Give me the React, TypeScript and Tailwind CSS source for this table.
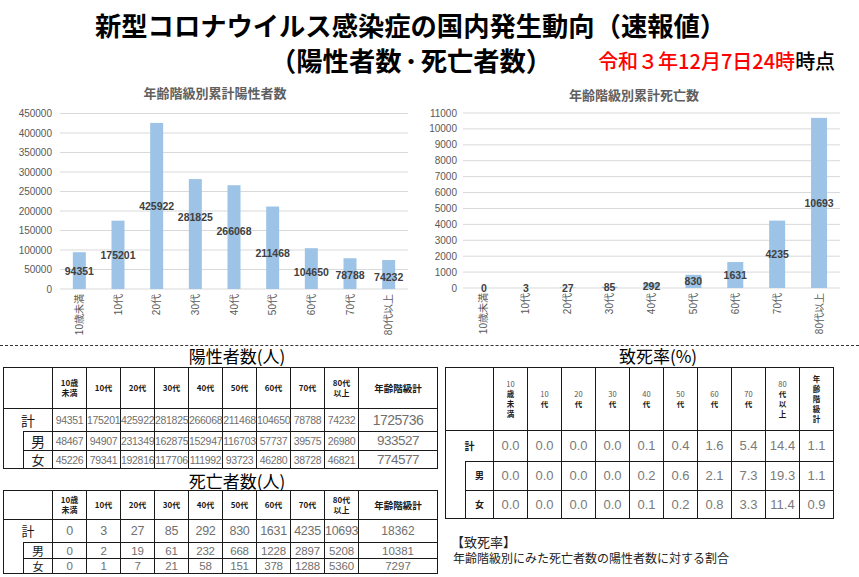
import React from "react";

const AGES = ["10歳未満", "10代", "20代", "30代", "40代", "50代", "60代", "70代", "80代以上"];

type ChartProps = {
  width: number;
  title: string;
  titleX: number;
  titleY: number;
  plotL: number;
  plotR: number;
  base: number;
  top: number;
  max: number;
  step: number;
  axisX: number;
  barW: number;
  values: number[];
  labelY: number[];
};

function BarChart(p: ChartProps) {
  const cw = (p.plotR - p.plotL) / p.values.length;
  const scale = (p.base - p.top) / p.max;
  const ticks: number[] = [];
  for (let v = 0; v <= p.max; v += p.step) ticks.push(v);

  return (
    <svg
      width={p.width}
      height={265}
      className="block shrink-0 overflow-visible"
      fontFamily="'Liberation Sans','Noto Sans CJK JP',sans-serif"
    >
      <text x={p.titleX} y={p.titleY} textAnchor="middle" dominantBaseline="central" fontSize={13} fontWeight={700} fill="#5f5f5f">
        {p.title}
      </text>
      {ticks.map((v) => {
        const y = p.base - v * scale;
        return (
          <g key={v}>
            <line x1={p.plotL} x2={p.plotR} y1={y} y2={y} stroke="#d9d9d9" strokeWidth={1} />
            <text x={p.axisX} y={y} textAnchor="end" dominantBaseline="central" fontSize={10} fill="#595959">
              {v}
            </text>
          </g>
        );
      })}
      {p.values.map((v, i) => {
        const cx = p.plotL + cw * (i + 0.5);
        const h = v * scale;
        return (
          <g key={i}>
            <rect x={cx - p.barW / 2} y={p.base - h} width={p.barW} height={h} fill="#9dc3e6" />
            <text x={cx} y={p.labelY[i]} textAnchor="middle" dominantBaseline="central" fontSize={10.5} fontWeight={700} fill="#404040">
              {v}
            </text>
            <text
              x={cx}
              y={p.base + 5}
              transform={`rotate(-90 ${cx} ${p.base + 5})`}
              textAnchor="end"
              dominantBaseline="central"
              fontSize={10}
              fill="#595959"
            >
              {AGES[i]}
            </text>
          </g>
        );
      })}
    </svg>
  );
}

const cell = "border border-[#1a1a1a] p-0 text-center align-middle";

const POS = {
  total: ["94351", "175201", "425922", "281825", "266068", "211468", "104650", "78788", "74232"],
  male: ["48467", "94907", "231349", "162875", "152947", "116703", "57737", "39575", "26980"],
  female: ["45226", "79341", "192816", "117706", "111992", "93723", "46280", "38728", "46821"],
};

const DEATH = {
  total: ["0", "3", "27", "85", "292", "830", "1631", "4235", "10693"],
  male: ["0", "2", "19", "61", "232", "668", "1228", "2897", "5208"],
  female: ["0", "1", "7", "21", "58", "151", "378", "1288", "5360"],
};

const RATE = {
  total: ["0.0", "0.0", "0.0", "0.0", "0.1", "0.4", "1.6", "5.4", "14.4", "1.1"],
  male: ["0.0", "0.0", "0.0", "0.0", "0.2", "0.6", "2.1", "7.3", "19.3", "1.1"],
  female: ["0.0", "0.0", "0.0", "0.0", "0.1", "0.2", "0.8", "3.3", "11.4", "0.9"],
};

function HeadRow({ h }: { h: string }) {
  return (
    <tr className={h}>
      <th colSpan={2} className={cell}></th>
      <th className={cell}>10歳<br />未満</th>
      <th className={cell}>10代</th>
      <th className={cell}>20代</th>
      <th className={cell}>30代</th>
      <th className={cell}>40代</th>
      <th className={cell}>50代</th>
      <th className={cell}>60代</th>
      <th className={cell}>70代</th>
      <th className={cell}>80代<br />以上</th>
      <th className={`${cell} text-[9.5px]`}>年齢階級計</th>
    </tr>
  );
}

function Cols() {
  return (
    <colgroup>
      <col className="w-[20px]" />
      <col className="w-[29px]" />
      {AGES.map((a) => (
        <col key={a} className="w-[34px]" />
      ))}
      <col className="w-[79px]" />
    </colgroup>
  );
}

function PositiveTable() {
  const num = "font-['Liberation_Sans',sans-serif] text-[#6f6f6f]";
  return (
    <table className="ml-[3px] w-[434px] table-fixed border-collapse text-[8px] font-normal leading-[10px] text-[#1a1a1a]">
      <Cols />
      <tbody>
        <HeadRow h="h-[41px]" />
        <tr className="h-[23px]">
          <td colSpan={2} className={`${cell} text-[14px]`}>計</td>
          {POS.total.map((v, i) => (
            <td key={i} className={`${cell} ${num} text-[10.5px] tracking-[-0.3px]`}>{v}</td>
          ))}
          <td className={`${cell} ${num} text-[14px] tracking-[-0.6px]`}>1725736</td>
        </tr>
        <tr className="h-[19px]">
          <td rowSpan={2} className={`${cell} [border-top-style:hidden]`}></td>
          <td className={`${cell} text-[14px]`}>男</td>
          {POS.male.map((v, i) => (
            <td key={i} className={`${cell} ${num} text-[10.5px] tracking-[-0.3px]`}>{v}</td>
          ))}
          <td className={`${cell} ${num} text-[13.5px] tracking-[-0.5px]`}>933527</td>
        </tr>
        <tr className="h-[18px]">
          <td className={`${cell} text-[13px]`}>女</td>
          {POS.female.map((v, i) => (
            <td key={i} className={`${cell} ${num} text-[10.5px] tracking-[-0.3px]`}>{v}</td>
          ))}
          <td className={`${cell} ${num} text-[13.5px] tracking-[-0.5px]`}>774577</td>
        </tr>
      </tbody>
    </table>
  );
}

function DeathTable() {
  const num = "font-['Liberation_Sans',sans-serif] text-[#6f6f6f]";
  return (
    <table className="ml-[3px] w-[434px] table-fixed border-collapse text-[8px] leading-[10px] text-[#1a1a1a]">
      <Cols />
      <tbody>
        <HeadRow h="h-[29px]" />
        <tr className="h-[23px]">
          <td colSpan={2} className={`${cell} text-[13px]`}>計</td>
          {DEATH.total.map((v, i) => (
            <td key={i} className={`${cell} ${num} text-[12.5px] tracking-[-0.3px]`}>{v}</td>
          ))}
          <td className={`${cell} ${num} text-[12px]`}>18362</td>
        </tr>
        <tr className="h-[16px]">
          <td rowSpan={2} className={`${cell} [border-top-style:hidden]`}></td>
          <td className={`${cell} text-[12px]`}>男</td>
          {DEATH.male.map((v, i) => (
            <td key={i} className={`${cell} ${num} text-[11.5px] tracking-[-0.2px]`}>{v}</td>
          ))}
          <td className={`${cell} ${num} text-[11.5px]`}>10381</td>
        </tr>
        <tr className="h-[15px]">
          <td className={`${cell} text-[11px]`}>女</td>
          {DEATH.female.map((v, i) => (
            <td key={i} className={`${cell} ${num} text-[11.5px] tracking-[-0.2px]`}>{v}</td>
          ))}
          <td className={`${cell} ${num} text-[11.5px]`}>7297</td>
        </tr>
      </tbody>
    </table>
  );
}

const RATE_HEAD = [
  ["10", "歳", "未", "満"],
  ["10", "代"],
  ["20", "代"],
  ["30", "代"],
  ["40", "代"],
  ["50", "代"],
  ["60", "代"],
  ["70", "代"],
  ["80", "代", "以", "上"],
  ["年", "齢", "階", "級", "計"],
];

function RateTable() {
  const num = "font-['Liberation_Sans',sans-serif] text-[13px] text-[#7a7a7a]";
  return (
    <table className="ml-[5px] w-[388px] table-fixed border-collapse text-[7.5px] leading-[10px] text-[#1a1a1a]">
      <colgroup>
        <col className="w-[20px]" />
        <col className="w-[28px]" />
        {RATE_HEAD.map((h, i) => (
          <col key={i} className="w-[34px]" />
        ))}
      </colgroup>
      <tbody>
        <tr className="h-[63px]">
          <th colSpan={2} className={cell}></th>
          {RATE_HEAD.map((h, i) => (
            <th key={i} className={`${cell} font-bold`}>
              <div className="flex flex-col items-center">
                {h.map((c, j) => (
                  <span key={j} className={j === 0 && c.length === 2 ? "font-normal text-[#555]" : ""}>{c}</span>
                ))}
              </div>
            </th>
          ))}
        </tr>
        <tr className="h-[31px]">
          <td colSpan={2} className={`${cell} text-[10px] font-bold`}>計</td>
          {RATE.total.map((v, i) => (
            <td key={i} className={`${cell} ${num}`}>{v}</td>
          ))}
        </tr>
        <tr className="h-[29px]">
          <td rowSpan={2} className={`${cell} [border-top-style:hidden]`}></td>
          <td className={`${cell} text-[9px] font-bold`}>男</td>
          {RATE.male.map((v, i) => (
            <td key={i} className={`${cell} ${num}`}>{v}</td>
          ))}
        </tr>
        <tr className="h-[28px]">
          <td className={`${cell} text-[9px] font-bold`}>女</td>
          {RATE.female.map((v, i) => (
            <td key={i} className={`${cell} ${num}`}>{v}</td>
          ))}
        </tr>
      </tbody>
    </table>
  );
}

export default function App() {
  return (
    <div className="relative h-[577px] w-[859px] overflow-hidden bg-white font-['Noto_Sans_CJK_JP','Liberation_Sans',sans-serif] text-black">
      <header className="h-[80px]">
        <div className="pl-[95px] pt-[10px] text-[26.3px] font-bold leading-[30px]">
          新型コロナウイルス感染症の国内発生動向（速報値）
        </div>
        <div className="mt-[5px] flex items-end">
          <div className="pl-[270px] text-[26.3px] font-bold leading-[30px]">
            （陽性者数<span className="mx-[3px]">･</span>死亡者数）
          </div>
          <div className="ml-[46px] pb-[2px] text-[20px] font-medium leading-[24px]">
            <span className="text-[#ff0000]">令和３年12月7日24時</span>時点
          </div>
        </div>
      </header>

      <section className="flex h-[265px]">
        <BarChart
          width={430}
          title="年齢階級別累計陽性者数"
          titleX={215}
          titleY={13}
          plotL={60}
          plotR={408}
          base={209}
          top={33.5}
          max={450000}
          step={50000}
          axisX={52}
          barW={13}
          values={[94351, 175201, 425922, 281825, 266068, 211468, 104650, 78788, 74232]}
          labelY={[191, 175, 126, 137, 151, 173, 192, 195, 197]}
        />
        <BarChart
          width={429}
          title="年齢階級別累計死亡数"
          titleX={204}
          titleY={15}
          plotL={33}
          plotR={410}
          base={208}
          top={33}
          max={11000}
          step={1000}
          axisX={27}
          barW={16}
          values={[0, 3, 27, 85, 292, 830, 1631, 4235, 10693]}
          labelY={[208, 208, 208, 207, 206, 201, 195, 174, 123]}
        />
      </section>

      <div className="border-t border-dashed border-[#333]" />

      <section className="flex">
        <div className="w-[440px]">
          <div className="pl-[34px] text-center text-[17px] leading-[19px]">陽性者数(人)</div>
          <div className="mt-[2px]">
            <PositiveTable />
          </div>
          <div className="mt-[2px] pl-[34px] text-center text-[17px] leading-[19px]">死亡者数(人)</div>
          <DeathTable />
        </div>
        <div className="flex-1">
          <div className="pl-[17px] text-center text-[17px] leading-[19px]">致死率(%)</div>
          <div className="mt-[2px]">
            <RateTable />
          </div>
          <div className="mt-[14px] pl-[11px] text-[13px] leading-[17px] text-[#222]">【致死率】</div>
          <div className="pl-[13px] text-[12px] leading-[15px] text-[#222]">年齢階級別にみた死亡者数の陽性者数に対する割合</div>
        </div>
      </section>
    </div>
  );
}
